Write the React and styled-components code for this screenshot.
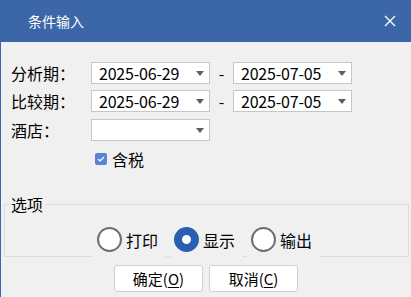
import React from 'react';
import styled, { createGlobalStyle } from 'styled-components';

const GlobalStyle = createGlobalStyle`
  html, body {
    margin: 0;
    padding: 0;
    background: #f0f0f0;
  }
  body {
    font-family: "Noto Sans CJK SC", "Noto Sans", sans-serif;
    color: #000;
  }
`;

const Dialog = styled.div`
  width: 411px;
  height: 297px;
  box-sizing: border-box;
  border-left: 1px solid #3b67a8;
  background: #f0f0f0;
  display: flex;
  flex-direction: column;
  overflow: hidden;
`;

const TitleBar = styled.div`
  height: 42px;
  flex: none;
  background: #3b67a8;
  display: flex;
  align-items: center;
  justify-content: space-between;
  padding: 0 15px 0 27px;
  color: #fff;
  font-size: 14px;
`;

const CloseButton = styled.svg`
  width: 12px;
  height: 12px;
  display: block;
`;

const Body = styled.div`
  padding: 20px 0 0 10px;
  display: flex;
  flex-direction: column;
`;

const Row = styled.div`
  display: flex;
  align-items: center;
  height: 22px;
  margin-bottom: ${p => p.gap || 0}px;
`;

const Label = styled.div`
  width: 80px;
  font-size: 16px;
  line-height: 22px;
`;

const Combo = styled.div`
  width: 119px;
  height: 22px;
  box-sizing: border-box;
  border: 1px solid #c6c6c6;
  background: #fff;
  display: flex;
  align-items: center;
  justify-content: space-between;
  padding: 0 5px 0 7px;
  font-size: 16px;
  letter-spacing: -0.2px;
`;

const Arrow = styled.span`
  width: 0;
  height: 0;
  border-left: 4.5px solid transparent;
  border-right: 4.5px solid transparent;
  border-top: 5px solid #5e5e5e;
  margin-left: auto;
`;

const Dash = styled.div`
  width: 23px;
  text-align: center;
  font-size: 16px;
`;

const CheckRow = styled.label`
  display: flex;
  align-items: center;
  margin: 10px 0 0 84px;
  height: 16px;
  font-size: 16px;
  gap: 5px;
`;

const CheckBox = styled.span`
  width: 12px;
  height: 12px;
  border-radius: 2px;
  background: #5a84d6;
  display: flex;
  align-items: center;
  justify-content: center;
`;

const Group = styled.fieldset`
  margin: 29px 2px 0 3px;
  padding: 0;
  border: 1px solid #dcdcdc;
  min-width: 0;
`;

const Legend = styled.legend`
  margin-left: 5px;
  padding: 0 1px;
  font-size: 16px;
  line-height: 16px;
`;

const RadioRow = styled.div`
  display: flex;
  justify-content: center;
  gap: 4px;
  margin: 10px 0 -1px 0;
  height: 35px;
`;

const RadioItem = styled.label`
  display: flex;
  align-items: center;
  gap: 4px;
  padding: 0 8px 0 4px;
  background: #f0f0f0;
  font-size: 16px;
`;

const RadioCircle = styled.span`
  width: 25px;
  height: 25px;
  box-sizing: border-box;
  border-radius: 50%;
  border: ${p => (p.checked ? '8.5px solid #2a5eb0' : '2px solid #6e6e6e')};
  background: #fff;
`;

const Buttons = styled.div`
  display: flex;
  justify-content: center;
  gap: 6px;
  margin-top: 8px;
`;

const Button = styled.button`
  width: 89px;
  height: 27px;
  box-sizing: border-box;
  border: 1px solid #cfcfcf;
  border-radius: 3px;
  background: #fff;
  font-family: "Noto Sans CJK SC", sans-serif;
  font-size: 15px;
  color: #000;
  padding: 0;
  display: flex;
  align-items: center;
  justify-content: center;

  u {
    text-decoration-thickness: 1px;
    text-underline-offset: 2px;
  }
`;

const radios = [
  { label: '打印', checked: false },
  { label: '显示', checked: true },
  { label: '输出', checked: false },
];

const App = () => {
  return (
    <>
      <GlobalStyle />
      <Dialog>
        <TitleBar>
          <span>条件输入</span>
          <CloseButton viewBox="0 0 12 12">
            <path d="M1 1 L11 11 M11 1 L1 11" stroke="#fff" strokeWidth="1.3" fill="none" />
          </CloseButton>
        </TitleBar>
        <Body>
          <Row gap={6}>
            <Label>分析期：</Label>
            <Combo>2025-06-29<Arrow /></Combo>
            <Dash>-</Dash>
            <Combo>2025-07-05<Arrow /></Combo>
          </Row>
          <Row gap={7}>
            <Label>比较期：</Label>
            <Combo>2025-06-29<Arrow /></Combo>
            <Dash>-</Dash>
            <Combo>2025-07-05<Arrow /></Combo>
          </Row>
          <Row>
            <Label>酒店：</Label>
            <Combo><Arrow /></Combo>
          </Row>
          <CheckRow>
            <CheckBox>
              <svg width="8" height="6" viewBox="0 0 8 6">
                <path d="M1 3 L3 5 L7 1" stroke="#fff" strokeWidth="1.2" fill="none" />
              </svg>
            </CheckBox>
            含税
          </CheckRow>
        </Body>
        <Group>
          <Legend>选项</Legend>
          <RadioRow>
            {radios.map(r => (
              <RadioItem key={r.label}>
                <RadioCircle checked={r.checked} />
                {r.label}
              </RadioItem>
            ))}
          </RadioRow>
        </Group>
        <Buttons>
          <Button>确定(<u>O</u>)</Button>
          <Button>取消(<u>C</u>)</Button>
        </Buttons>
      </Dialog>
    </>
  );
};

export default App;
